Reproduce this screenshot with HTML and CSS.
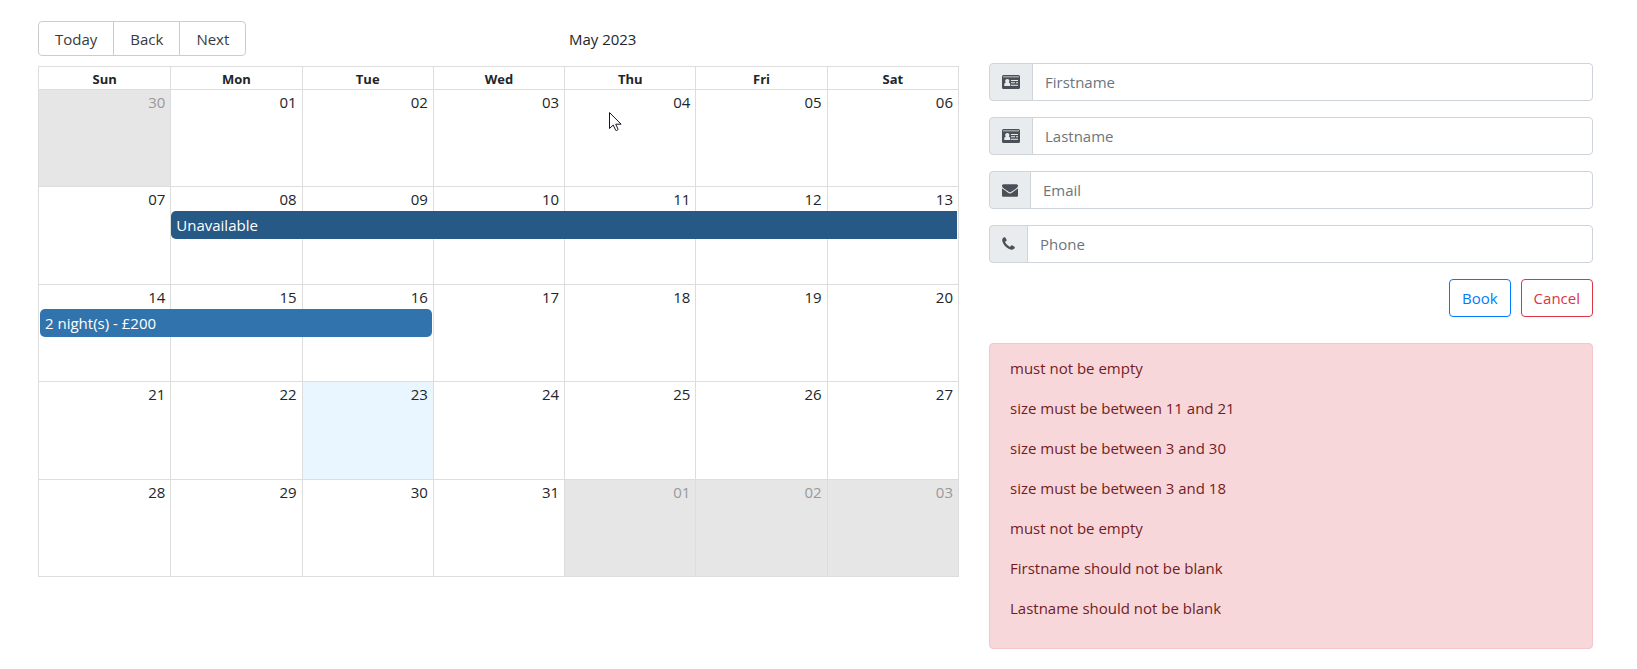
FILE: index.html
```html
<!DOCTYPE html>
<html lang="en">
<head>
<meta charset="utf-8">
<meta name="viewport" content="width=device-width, initial-scale=1">
<title>Booking calendar</title>
<link rel="stylesheet" href="styles.css">
</head>
<body>
<svg class="defs" aria-hidden="true">
  <symbol id="icon-card" viewBox="0 0 18 14">
    <path fill-rule="evenodd" d="M1.500 0h15A1.500 1.500 0 0 1 18 1.500v11a1.500 1.500 0 0 1-1.500 1.500h-15A1.500 1.500 0 0 1 0 12.500v-11A1.500 1.500 0 0 1 1.500 0zM1 1.500v.8h16v-.8zM2.300 11h5.900c.3-2-.4-3.200-1.500-3.500.5-.5.700-1 .7-1.600C7.400 4.700 6.400 4 5.300 4s-2.100.7-2.100 1.900c0 .6.200 1.100.7 1.600C2.700 7.800 2 9 2.300 11zM9 5v1h7V5zM9 7.300v1h4v-1zM14 7.300v1h2v-1zM9 9.700v1h7v-1z"/>
  </symbol>
  <symbol id="icon-mail" viewBox="0 0 1792 1792">
    <path d="M1792 710v794q0 66-47 113t-113 47h-1472q-66 0-113-47t-47-113v-794q44 49 101 87 362 246 497 345 57 42 92.500 65.500t94.500 48 110 24.500h2q51 0 110-24.500t94.500-48 92.500-65.500q170-123 498-345 57-39 100-87zm0-294q0 79-49 151t-122 123q-376 261-468 325-10 7-42.500 31t-54 38.800-52 33.200-57.500 27-50 9h-2q-23 0-50-9t-57.500-27-52-33.200-54-38.800-42.500-31q-91-64-262-182.500t-205-142.500q-62-42-117-115.500t-55-136.500q0-78 41.500-130t118.500-52h1472q65 0 112.500 47t47.500 113z"/>
  </symbol>
  <symbol id="icon-phone" viewBox="192 0 1408 1792">
    <path d="M1600 1240q0 27-10 70.500t-21 68.500q-21 50-122 106-94 51-186 51-27 0-53-3.500t-57.500-12.500-47-14.500-55.500-20.500-49-18q-98-35-175-83-127-79-264-216t-216-264q-48-77-83-175-3-9-18-49t-20.500-55.500-14.500-47-12.500-57.500-3.500-53q0-92 51-186 56-101 106-122 25-11 68.500-21t70.500-10q14 0 21 3 18 6 53 76 11 19 30 54t35 63.500 31 53.500q3 4 17.500 25t21.500 35.500 7 28.500q0 20-28.500 50t-62 55-62 53-28.500 46q0 9 5 22.500t8.500 20.500 14 24 11.500 19q76 137 174 235t235 174q2 1 19 11.500t24 14 20.500 8.500 22.500 5q18 0 46-28.500t53-62 55-62 50-28.500q14 0 28.500 7t35.500 21.500 25 17.500q25 15 53.500 31t63.500 35 54 30q70 35 76 53 3 7 3 21z"/>
  </symbol>
</svg>
<main class="page">
  <section class="calendar" aria-label="Availability">
    <div class="toolbar">
      <div class="btn-group">
        <button type="button">Today</button>
        <button type="button">Back</button>
        <button type="button">Next</button>
      </div>
      <span class="toolbar-label">May 2023</span>
    </div>
    <div class="month">
      <div class="week-head">
        <span>Sun</span><span>Mon</span><span>Tue</span><span>Wed</span><span>Thu</span><span>Fri</span><span>Sat</span>
      </div>
      <div class="week">
        <div class="day off">30</div><div class="day">01</div><div class="day">02</div><div class="day">03</div>
        <div class="day">04
          <svg class="pointer" viewBox="0 0 13 20" aria-hidden="true"><path d="M.5.500v16l3.700-3.500 2.500 5.300c.3.700 2.700-.2 2.300-1.200L6.700 12.200h5.400z"/></svg>
        </div>
        <div class="day">05</div><div class="day">06</div>
      </div>
      <div class="week">
        <div class="day">07</div><div class="day">08</div><div class="day">09</div><div class="day">10</div><div class="day">11</div><div class="day">12</div><div class="day">13</div>
        <div class="events"><div class="event unavailable">Unavailable</div></div>
      </div>
      <div class="week">
        <div class="day">14</div><div class="day">15</div><div class="day">16</div><div class="day">17</div><div class="day">18</div><div class="day">19</div><div class="day">20</div>
        <div class="events"><div class="event booking">2 night(s) - £200</div></div>
      </div>
      <div class="week">
        <div class="day">21</div><div class="day">22</div><div class="day today">23</div><div class="day">24</div><div class="day">25</div><div class="day">26</div><div class="day">27</div>
      </div>
      <div class="week">
        <div class="day">28</div><div class="day">29</div><div class="day">30</div><div class="day">31</div><div class="day off">01</div><div class="day off">02</div><div class="day off">03</div>
      </div>
    </div>
  </section>
  <section class="details" aria-label="Booking details">
    <form class="form">
      <div class="field">
        <label class="addon" for="firstname" aria-label="Firstname"><svg class="icon-card"><use href="#icon-card"/></svg></label>
        <input id="firstname" type="text" placeholder="Firstname">
      </div>
      <div class="field">
        <label class="addon" for="lastname" aria-label="Lastname"><svg class="icon-card"><use href="#icon-card"/></svg></label>
        <input id="lastname" type="text" placeholder="Lastname">
      </div>
      <div class="field">
        <label class="addon" for="email" aria-label="Email"><svg class="icon-mail"><use href="#icon-mail"/></svg></label>
        <input id="email" type="text" placeholder="Email">
      </div>
      <div class="field">
        <label class="addon" for="phone" aria-label="Phone"><svg class="icon-phone"><use href="#icon-phone"/></svg></label>
        <input id="phone" type="text" placeholder="Phone">
      </div>
      <div class="actions">
        <button type="button" class="btn btn-primary">Book</button>
        <button type="button" class="btn btn-danger">Cancel</button>
      </div>
    </form>
    <div class="alert" role="alert">
      <p>must not be empty</p>
      <p>size must be between 11 and 21</p>
      <p>size must be between 3 and 30</p>
      <p>size must be between 3 and 18</p>
      <p>must not be empty</p>
      <p>Firstname should not be blank</p>
      <p>Lastname should not be blank</p>
    </div>
  </section>
</main>
</body>
</html>
```

FILE: styles.css
```css
*, *::before, *::after { box-sizing: border-box; }

body {
  margin: 0;
  background: #fff;
  color: #212529;
  font-family: "Segoe UI", "Open Sans", "Noto Sans", sans-serif;
  font-size: 15px;
  line-height: 24px;
}

button, input { font: inherit; }
.defs { position: absolute; width: 0; height: 0; }

.page {
  display: grid;
  grid-template-columns: 3fr 2fr;
  padding: 21px 29px 20px 23px;
}
.calendar, .details { min-width: 0; padding: 0 15px; }

/* Toolbar */
.toolbar {
  display: grid;
  grid-template-columns: auto 1fr;
  align-items: center;
  margin-bottom: 10px;
}
.btn-group { display: flex; }
.btn-group button {
  height: 35px;
  padding: 0 16px;
  border: 1px solid #ccc;
  background: #fff;
  color: #373a3c;
  cursor: pointer;
}
.btn-group button + button { margin-left: -1px; }
.btn-group button:first-child { border-radius: 4px 0 0 4px; }
.btn-group button:last-child { border-radius: 0 4px 4px 0; }
.toolbar-label { text-align: center; }

/* Month grid */
.month {
  display: flex;
  flex-direction: column;
  min-height: 511px;
  border: 1px solid #ddd;
}
.week-head, .week {
  display: grid;
  grid-template-columns: repeat(7, minmax(0, 1fr));
}
.week-head { height: 22px; }
.week-head span {
  text-align: center;
  font-size: 13px;
  font-weight: 700;
}
.week-head span + span, .day + .day { border-left: 1px solid #ddd; }
.week {
  position: relative;
  flex: 1 0 0;
  border-top: 1px solid #ddd;
}
.day { position: relative; padding-right: 5px; text-align: right; }
.day.off { background: #e6e6e6; color: #999; }
.day.today { background: #eaf6ff; }
.events {
  position: absolute;
  top: 24px;
  left: 0;
  right: 0;
  display: grid;
  grid-template-columns: repeat(7, minmax(0, 1fr));
}
.event {
  margin: 0 1px;
  padding: 2px 5px;
  border-radius: 5px;
  color: #fff;
}
.unavailable {
  grid-column: 2 / 8;
  border-radius: 5px 0 0 5px;
  background: #265985;
}
.booking { grid-column: 1 / 4; background: #3174ad; }
.pointer {
  position: absolute;
  top: 22px;
  left: 44px;
  width: 13px;
  height: 20px;
  fill: #fff;
  stroke: #111827;
}

/* Form */
.details { padding-top: 42px; }
.form { display: grid; gap: 16px; margin-bottom: 26px; }
.field { display: flex; }
.addon {
  display: flex;
  align-items: center;
  padding: 0 12px;
  border: 1px solid #ced4da;
  border-radius: 4px 0 0 4px;
  background: #e9ecef;
}
.addon svg { fill: #495057; }
.icon-card { width: 18px; height: 14px; }
.icon-mail { width: 16px; height: 16px; }
.icon-phone { width: 13px; height: 16px; }
.field input {
  flex: 1;
  min-width: 0;
  height: 38px;
  margin-left: -1px;
  padding: 6px 12px;
  border: 1px solid #ced4da;
  border-radius: 0 4px 4px 0;
  background: #fff;
  color: #495057;
}
.field input::placeholder { color: #6c757d; opacity: 1; }
.actions { display: flex; justify-content: flex-end; gap: 10px; }
.btn {
  height: 38px;
  padding: 0 12px;
  border: 1px solid;
  border-radius: 4px;
  background: #fff;
  cursor: pointer;
}
.btn-primary { color: #007bff; border-color: #007bff; }
.btn-danger { color: #dc3545; border-color: #dc3545; }

/* Validation messages */
.alert {
  padding: 12px 20px;
  border: 1px solid #f5c6cb;
  border-radius: 4px;
  background: #f8d7da;
  color: #721c24;
}
.alert p { margin: 0 0 16px; }
```
